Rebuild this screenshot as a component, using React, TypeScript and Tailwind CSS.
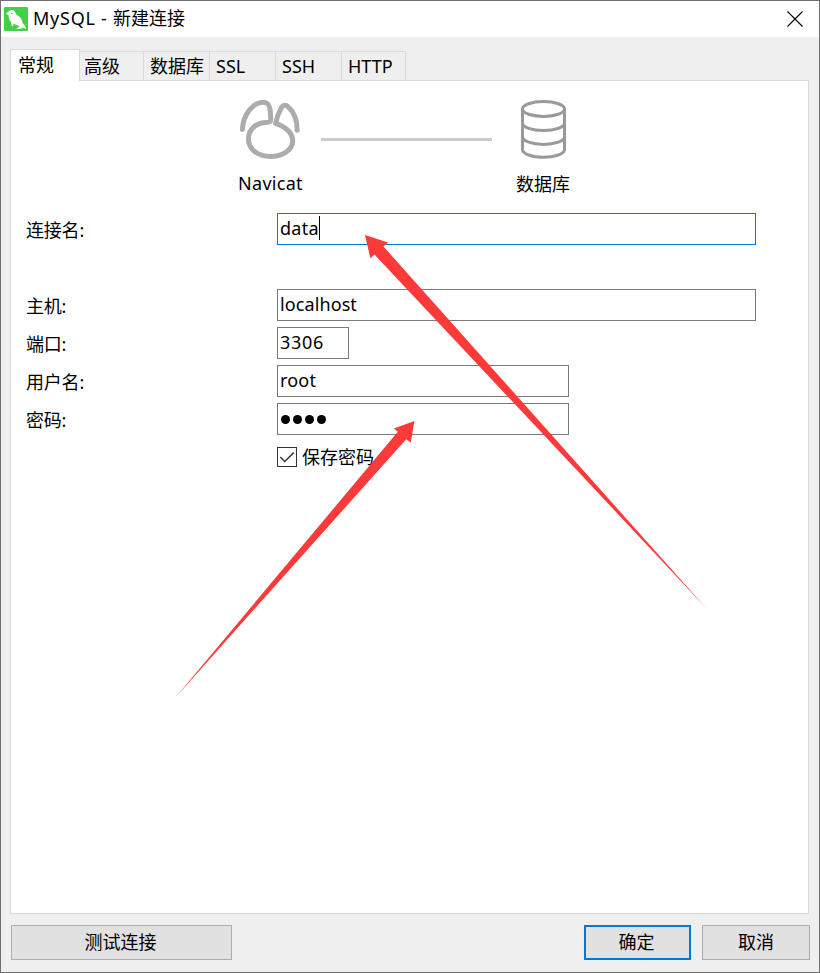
import React, { useState } from 'react';

const tabs = [
  { key: 'advanced', label: '高级', width: 'w-[64px]', indent: 'pl-[4px]' },
  { key: 'databases', label: '数据库', width: 'w-[66px]', indent: 'pl-[6px]' },
  { key: 'ssl', label: 'SSL', width: 'w-[66px]', indent: 'pl-[6px]' },
  { key: 'ssh', label: 'SSH', width: 'w-[66px]', indent: 'pl-[6px]' },
  { key: 'http', label: 'HTTP', width: 'w-[64px]', indent: 'pl-[6px]' },
];

const DolphinIcon = () => (
  <svg className="-mt-px" width="24" height="24" viewBox="0 0 24 24">
    <rect width="24" height="24" rx="1.2" fill="#41d148" />
    <path
      d="M2 6.4C3.6 5.6 4.6 4 6.4 3.2C8.4 2.4 10.4 3.2 11.2 5.2C11.8 7 12.8 8 14.4 9C17 10.6 18.2 13 18.8 16.4C20.6 17.6 21.8 19.4 22 22C20.4 20.8 18.6 20.8 17 21.6C15.4 22.4 13.8 22.2 12.2 21.4C13.6 21 15 20.2 15.6 18.8C13.4 18.6 11.2 17.8 9.6 16.6L9 19.8C7.6 18.6 7 16.8 6.9 14.8C5.2 13 4.4 10.6 4.6 8.2C3.8 7.8 2.8 7.2 2 6.4Z"
      fill="#fff"
    />
    <circle cx="7.8" cy="6.4" r="0.8" fill="#41d148" />
  </svg>
);

const NavicatIcon = () => (
  <svg width="62" height="60" viewBox="0 1 62 60" fill="none" stroke="#acacac" strokeWidth="5" strokeLinecap="round" strokeLinejoin="round">
    <path d="M2.4 30.5C3 17 12 3.3 23.5 3.3C28 3.3 29.6 6 30.2 12L30.8 20C30.8 23 29.5 23.4 26 23.4C15.5 23.7 8.4 31 8.4 40C8.4 50.5 18.5 57.5 30.5 57.5C43 57.5 52.7 50.5 52.7 42C52.7 34 45.5 28 35.7 24.4" />
    <path d="M35.7 24C37 18 39.5 12 41.5 8.4C43.2 5.8 45.6 5.6 48 7.6C54 13 57.2 21.5 57.2 31.2" />
  </svg>
);

const DatabaseIcon = () => (
  <svg width="45" height="60" viewBox="0 0 45 60" fill="none" stroke="#999" strokeWidth="3">
    <ellipse cx="22.5" cy="9" rx="21" ry="7.4" />
    <path d="M1.5 9V49.5C1.5 53.8 10.9 57.3 22.5 57.3S43.5 53.8 43.5 49.5V9" />
    <path d="M1.5 23C1.5 27.2 10.9 30.6 22.5 30.6S43.5 27.2 43.5 23" />
    <path d="M1.5 36.8C1.5 41 10.9 44.4 22.5 44.4S43.5 41 43.5 36.8" />
  </svg>
);

const Arrows = () => (
  <svg className="pointer-events-none absolute -left-px -top-px" width="820" height="973" viewBox="0 0 820 973" fill="#fc3a3a">
    <path d="M365 235L388 242.4L383.4 246.4L706.5 608.5L374.4 254.4L370.4 258.2Z" />
    <path d="M414.4 421L394 428.4L397.8 431.8L175 698L406.2 439.2L410.8 442.4Z" />
  </svg>
);

type FieldProps = {
  label: string;
  width: string;
  border?: string;
  children: React.ReactNode;
};

const Field = ({ label, width, border = 'border-[#7a7a7a]', children }: FieldProps) => (
  <div className="flex h-8">
    <label className="w-[251px] pt-[4px] tracking-[-0.2px]">{label}</label>
    <div className={`flex h-8 items-center border bg-white pl-[2px] pb-[2px] ${width} ${border}`}>{children}</div>
  </div>
);

export default function App() {
  const [savePassword, setSavePassword] = useState(true);

  return (
    <div className="relative flex h-[973px] w-[820px] flex-col border border-[#6f6f6f] bg-[#efefef] font-['Noto_Sans','Noto_Sans_CJK_SC',sans-serif] text-[18px] leading-[27px] text-black">
      <header className="flex h-9 items-center bg-white pl-[3px] pr-4">
        <DolphinIcon />
        <h1 className="-mt-0.5 ml-[5px] flex-1 whitespace-pre">
          <span className="tracking-[0.75px]">MySQL - </span>新建连接
        </h1>
        <button aria-label="Close" className="-mt-px">
          <svg width="16" height="16" viewBox="0 0 16 16" stroke="#000" strokeWidth="1.1">
            <path d="M0.5 0.5L15.5 15.5M15.5 0.5L0.5 15.5" />
          </svg>
        </button>
      </header>

      {/* Tabs */}
      <nav className="z-10 ml-[9px] mt-[12px] flex h-8 items-end">
        <button className="h-8 w-[70px] border-x border-t border-[#d9d9d9] bg-white pb-px pl-[7px] text-left">常规</button>
        {tabs.map(tab => (
          <button
            key={tab.key}
            className={`mb-px h-[29px] whitespace-nowrap border-r border-t border-[#d9d9d9] pt-px text-left ${tab.width} ${tab.indent}`}
          >
            {tab.label}
          </button>
        ))}
      </nav>

      <main className="-mt-px ml-[9px] h-[834px] w-[799px] border border-[#d9d9d9] bg-white px-[15px]">
        {/* Connection diagram */}
        <div className="flex pl-[202px] pt-[19px]">
          <div className="w-[86px]">
            <div className="ml-[12px]"><NavicatIcon /></div>
            <div className="ml-[10px] mt-[10px] tracking-[0.3px]">Navicat</div>
          </div>
          <div className="ml-[7px] mt-[38px] h-[3px] w-[171px] bg-[#cbcbcb]" />
          <div className="ml-[24px] w-[54px]">
            <div className="ml-[5px]"><DatabaseIcon /></div>
            <div className="mt-[11px] -mb-px whitespace-nowrap">数据库</div>
          </div>
        </div>

        <div className="mt-[16px] flex flex-col gap-1.5">
          <Field label="连接名:" width="w-[479px]" border="border-[#0078d7]">
            <span className="tracking-[0.3px]">data</span>
            <span className="h-6 w-px bg-black" />
          </Field>
          <div className="h-8" />
          <Field label="主机:" width="w-[479px]"><span className="tracking-[0.1px]">localhost</span></Field>
          <Field label="端口:" width="w-[72px]"><span className="tracking-[0.7px]">3306</span></Field>
          <Field label="用户名:" width="w-[292px]"><span className="tracking-[0.2px]">root</span></Field>
          <Field label="密码:" width="w-[292px]">
            <div className="ml-[1px] mt-[3px] flex gap-[3px]">
              {[0, 1, 2, 3].map(i => <i key={i} className="size-[9px] rounded-full bg-black" />)}
            </div>
          </Field>
        </div>

        <label className="ml-[251px] mt-[8px] flex items-center">
          <input type="checkbox" className="sr-only" checked={savePassword} onChange={() => setSavePassword(!savePassword)} />
          <span className="size-5 border border-[#333] bg-white">
            {savePassword && (
              <svg width="18" height="18" viewBox="0 0 18 18" fill="none" stroke="#333" strokeWidth="1.5">
                <path d="M2.3 9L6.8 13.5L15.8 4.5" />
              </svg>
            )}
          </span>
          <span className="ml-[5px] mt-px">保存密码</span>
        </label>
      </main>

      <footer className="flex pl-[10px] pt-[11px]">
        <button className="h-[35px] w-[221px] border border-[#adadad] bg-[#e1e1e1] pr-[2px]">测试连接</button>
        <button className="ml-[352px] h-[35px] w-[107px] border-2 border-[#0078d7] bg-[#e1e1e1] pr-[2px]">确定</button>
        <button className="ml-[11px] h-[35px] w-[108px] border border-[#adadad] bg-[#e1e1e1]">取消</button>
      </footer>

      <Arrows />
    </div>
  );
}
